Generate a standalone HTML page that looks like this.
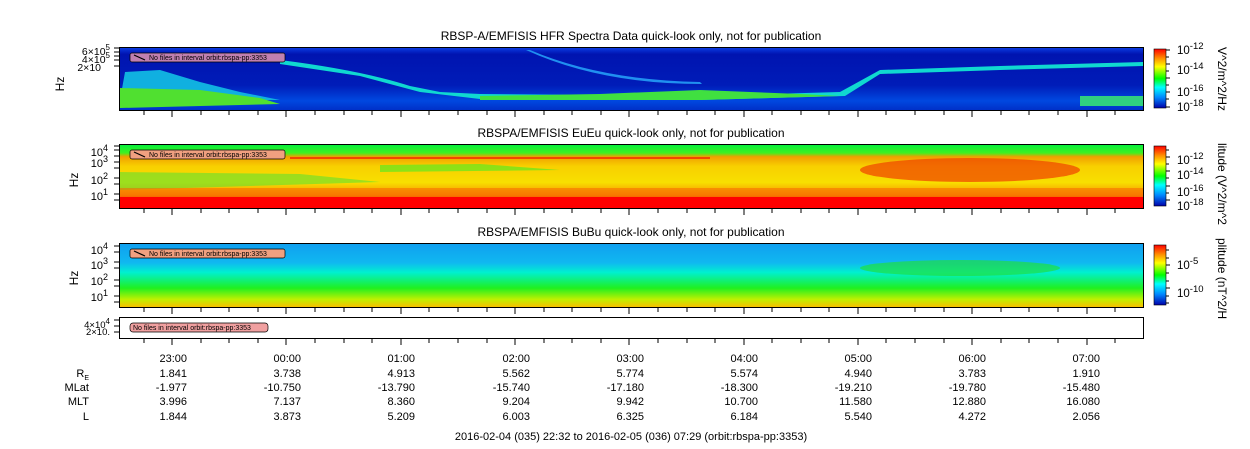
<!DOCTYPE html>
<html><head><meta charset="utf-8"><style>
html,body{margin:0;padding:0;background:#fff;}
svg{display:block;font-family:"Liberation Sans",sans-serif;}
</style></head><body>
<svg width="1250" height="449" viewBox="0 0 1250 449" xmlns="http://www.w3.org/2000/svg">
<defs>
<linearGradient id="cb" x1="0" y1="0" x2="0" y2="1">
<stop offset="0" stop-color="#f00"/><stop offset="0.15" stop-color="#f80"/><stop offset="0.3" stop-color="#ff0"/><stop offset="0.5" stop-color="#0f0"/><stop offset="0.65" stop-color="#0ff"/><stop offset="0.82" stop-color="#08f"/><stop offset="1" stop-color="#00a"/>
</linearGradient>
<linearGradient id="p1" x1="0" y1="0" x2="0" y2="1">
<stop offset="0" stop-color="#0a3ae0"/><stop offset="0.1" stop-color="#0014b0"/><stop offset="0.6" stop-color="#001cb8"/><stop offset="0.85" stop-color="#0048e0"/><stop offset="1" stop-color="#0030c8"/>
</linearGradient>
<linearGradient id="p2" x1="0" y1="0" x2="0" y2="1">
<stop offset="0" stop-color="#00f040"/><stop offset="0.14" stop-color="#40f020"/><stop offset="0.2" stop-color="#f0a000"/><stop offset="0.35" stop-color="#f8d000"/><stop offset="0.6" stop-color="#f8e000"/><stop offset="0.8" stop-color="#f89000"/><stop offset="0.9" stop-color="#f02000"/><stop offset="1" stop-color="#f00"/>
</linearGradient>
<linearGradient id="p3" x1="0" y1="0" x2="0" y2="1">
<stop offset="0" stop-color="#10a0f0"/><stop offset="0.3" stop-color="#10b8f0"/><stop offset="0.45" stop-color="#00f0d0"/><stop offset="0.7" stop-color="#20f020"/><stop offset="0.88" stop-color="#c0f000"/><stop offset="1" stop-color="#f8c000"/>
</linearGradient>
</defs>

<g font-size="12" text-anchor="middle" fill="#000">
<text x="631" y="40">RBSP-A/EMFISIS  HFR Spectra Data quick-look only, not for publication</text>
<text x="631" y="137">RBSPA/EMFISIS  EuEu quick-look only, not for publication</text>
<text x="631" y="236">RBSPA/EMFISIS  BuBu quick-look only, not for publication</text>
</g>

<rect x="120" y="48" width="1023" height="62" fill="url(#p1)"/>
<path d="M125 72 L160 70 L200 82 L240 92 L280 100 L120 100Z" fill="#10b0e0"/>
<path d="M120 88 L200 90 L260 98 L280 104 L120 108Z" fill="#50e030"/>
<path d="M280 60 Q360 70 410 86 L440 92 L480 94 L600 95 L700 96 L840 92 L880 70 L1000 66 L1143 62 L1143 66 L1000 70 L880 74 L845 96 L700 100 L480 99 L420 92 L360 76 L280 64Z" fill="#10d8d0"/>
<path d="M480 96 L600 94 L700 90 L800 94 L840 96 L700 100 L480 100Z" fill="#40e040"/>
<path d="M530 50 Q600 80 700 82 L702 84 Q600 84 526 50Z" fill="#2090f0"/>
<rect x="1080" y="96" width="63" height="10" fill="#30d080"/>
<rect x="119.5" y="47.5" width="1024" height="63" fill="none" stroke="#000"/>

<rect x="120" y="144" width="1023" height="64" fill="url(#p2)"/>
<rect x="290" y="157" width="420" height="2" fill="#f02000" opacity="0.7"/>
<path d="M380 165 L480 164 L560 170 L380 172Z" fill="#60e820" opacity="0.7"/>
<path d="M120 172 L300 174 L380 182 L120 190Z" fill="#60e030" opacity="0.6"/>
<ellipse cx="970" cy="170" rx="110" ry="12" fill="#f04000" opacity="0.7"/>
<rect x="120" y="188" width="1023" height="9" fill="#f86000" opacity="0.5"/>
<rect x="120" y="197" width="1023" height="11" fill="#f00"/>
<rect x="119.5" y="144.5" width="1024" height="64" fill="none" stroke="#000"/>

<rect x="120" y="244" width="1023" height="63" fill="url(#p3)"/>
<ellipse cx="960" cy="268" rx="100" ry="8" fill="#20e040" opacity="0.7"/>
<rect x="119.5" y="243.5" width="1024" height="64" fill="none" stroke="#000"/>

<rect x="119.5" y="317.5" width="1024" height="21" fill="#fff" stroke="#000"/>

<g font-size="7" fill="#000">
<rect x="130" y="53" width="155" height="9" rx="2" fill="#c080b0" stroke="#000" stroke-width="0.7"/>
<line x1="134" y1="55" x2="145" y2="60" stroke="#000" stroke-width="1.2"/>
<text x="149" y="60">No files in interval orbit:rbspa-pp:3353</text>
<rect x="130" y="150" width="155" height="9" rx="2" fill="#f0a080" stroke="#000" stroke-width="0.7"/>
<line x1="134" y1="152" x2="145" y2="157" stroke="#000" stroke-width="1.2"/>
<text x="149" y="157">No files in interval orbit:rbspa-pp:3353</text>
<rect x="130" y="249" width="155" height="9" rx="2" fill="#f0a080" stroke="#000" stroke-width="0.7"/>
<line x1="134" y1="251" x2="145" y2="256" stroke="#000" stroke-width="1.2"/>
<text x="149" y="256">No files in interval orbit:rbspa-pp:3353</text>
<rect x="130" y="323" width="138" height="9" rx="3" fill="#f0a0a0" stroke="#000" stroke-width="0.7"/>
<text x="133" y="330">No files in interval orbit:rbspa-pp:3353</text>
</g>

<g font-size="12" fill="#000">
<text transform="translate(64,84) rotate(-90)" text-anchor="middle">Hz</text>
<text transform="translate(78,180) rotate(-90)" text-anchor="middle">Hz</text>
<text transform="translate(78,278) rotate(-90)" text-anchor="middle">Hz</text>
</g>
<g font-size="11" fill="#000" text-anchor="end">
<text x="110" y="55" font-size="10.5">6×10<tspan font-size="8" dy="-5">5</tspan></text>
<text x="110" y="63" font-size="10.5">4×10<tspan font-size="8" dy="-5">5</tspan></text>
<text x="101" y="71" font-size="10.5">2×10</text>
<text x="108" y="156">10<tspan font-size="9" dy="-5">4</tspan></text>
<text x="108" y="167">10<tspan font-size="9" dy="-5">3</tspan></text>
<text x="108" y="184">10<tspan font-size="9" dy="-5">2</tspan></text>
<text x="108" y="200">10<tspan font-size="9" dy="-5">1</tspan></text>
<text x="108" y="254">10<tspan font-size="9" dy="-5">4</tspan></text>
<text x="108" y="269">10<tspan font-size="9" dy="-5">3</tspan></text>
<text x="108" y="285">10<tspan font-size="9" dy="-5">2</tspan></text>
<text x="108" y="301">10<tspan font-size="9" dy="-5">1</tspan></text>
<text x="110" y="328" font-size="9.5">4×10<tspan font-size="8" dy="-4">4</tspan></text>
<text x="110" y="335" font-size="9.5">2×10.</text>
</g>

<g stroke="#000" stroke-width="1">
<path id="tk" d="M144 110v5M172 110v7M201 110v5M229 110v5M258 110v5M286 110v7M315 110v5M344 110v5M372 110v5M401 110v7M429 110v5M458 110v5M487 110v5M515 110v7M544 110v5M572 110v5M601 110v5M629 110v7M658 110v5M687 110v5M715 110v5M744 110v7M772 110v5M801 110v5M829 110v5M858 110v7M886 110v5M915 110v5M944 110v5M972 110v7M1001 110v5M1029 110v5M1058 110v5M1087 110v7M1115 110v5"/>
<use href="#tk" y="98"/>
<use href="#tk" y="197"/>
<use href="#tk" y="228"/>
<path d="M114 48h5M114 52h5M114 56h5M114 60h5M114 66h5M114 146h5M114 150h5M114 156h5M114 162h5M114 168h5M114 178h5M114 184h5M114 194h5M114 200h5M114 246h5M114 252h5M114 262h5M114 268h5M114 280h5M114 286h5M114 296h5M114 302h5M114 320h5M114 326h5M114 332h5"/>
</g>

<rect x="1154" y="49" width="12" height="59" fill="url(#cb)" stroke="#000" stroke-width="0.6"/>
<rect x="1154" y="146" width="12" height="60" fill="url(#cb)" stroke="#000" stroke-width="0.6"/>
<rect x="1154" y="245" width="12" height="60" fill="url(#cb)" stroke="#000" stroke-width="0.6"/>
<g stroke="#000"><path d="M1166 50h4M1166 57h3M1166 64h4M1166 71h3M1166 78h4M1166 85h3M1166 92h4M1166 99h3M1166 107h4M1166 150h3M1166 157h4M1166 164h3M1166 171h4M1166 178h3M1166 186h4M1166 193h3M1166 200h4M1166 250h3M1166 258h3M1166 265h4M1166 273h3M1166 281h3M1166 288h4M1166 296h3M1166 303h3"/></g>
<g font-size="11.5" fill="#000">
<text x="1177" y="54">10<tspan font-size="9.5" dy="-5">-12</tspan></text>
<text x="1177" y="74">10<tspan font-size="9.5" dy="-5">-14</tspan></text>
<text x="1177" y="96">10<tspan font-size="9.5" dy="-5">-16</tspan></text>
<text x="1177" y="111">10<tspan font-size="9.5" dy="-5">-18</tspan></text>
<text x="1177" y="164">10<tspan font-size="9.5" dy="-5">-12</tspan></text>
<text x="1177" y="179">10<tspan font-size="9.5" dy="-5">-14</tspan></text>
<text x="1177" y="196">10<tspan font-size="9.5" dy="-5">-16</tspan></text>
<text x="1177" y="210">10<tspan font-size="9.5" dy="-5">-18</tspan></text>
<text x="1177" y="269">10<tspan font-size="9.5" dy="-5">-5</tspan></text>
<text x="1177" y="297">10<tspan font-size="9.5" dy="-5">-10</tspan></text>
<text transform="translate(1218,47) rotate(90)" font-size="12">V^2/m^2/Hz</text>
<text transform="translate(1218,143) rotate(90)" font-size="12">litude (V^2/m^2</text>
<text transform="translate(1218,238) rotate(90)" font-size="12">plitude (nT^2/H</text>
</g>

<g font-size="11" fill="#000" text-anchor="end">
<text x="89" y="377">R<tspan font-size="7" dy="3">E</tspan></text>
<text x="89" y="391">MLat</text>
<text x="89" y="405">MLT</text>
<text x="89" y="420">L</text>
<text x="187" y="362">23:00</text><text x="187" y="377">1.841</text><text x="187" y="391">-1.977</text><text x="187" y="405">3.996</text><text x="187" y="420">1.844</text>
<text x="301" y="362">00:00</text><text x="301" y="377">3.738</text><text x="301" y="391">-10.750</text><text x="301" y="405">7.137</text><text x="301" y="420">3.873</text>
<text x="415" y="362">01:00</text><text x="415" y="377">4.913</text><text x="415" y="391">-13.790</text><text x="415" y="405">8.360</text><text x="415" y="420">5.209</text>
<text x="530" y="362">02:00</text><text x="530" y="377">5.562</text><text x="530" y="391">-15.740</text><text x="530" y="405">9.204</text><text x="530" y="420">6.003</text>
<text x="644" y="362">03:00</text><text x="644" y="377">5.774</text><text x="644" y="391">-17.180</text><text x="644" y="405">9.942</text><text x="644" y="420">6.325</text>
<text x="758" y="362">04:00</text><text x="758" y="377">5.574</text><text x="758" y="391">-18.300</text><text x="758" y="405">10.700</text><text x="758" y="420">6.184</text>
<text x="872" y="362">05:00</text><text x="872" y="377">4.940</text><text x="872" y="391">-19.210</text><text x="872" y="405">11.580</text><text x="872" y="420">5.540</text>
<text x="986" y="362">06:00</text><text x="986" y="377">3.783</text><text x="986" y="391">-19.780</text><text x="986" y="405">12.880</text><text x="986" y="420">4.272</text>
<text x="1100" y="362">07:00</text><text x="1100" y="377">1.910</text><text x="1100" y="391">-15.480</text><text x="1100" y="405">16.080</text><text x="1100" y="420">2.056</text>
</g>
<text x="631" y="440" font-size="11" text-anchor="middle">2016-02-04 (035) 22:32 to 2016-02-05 (036) 07:29 (orbit:rbspa-pp:3353)</text>
</svg>
</body></html>
